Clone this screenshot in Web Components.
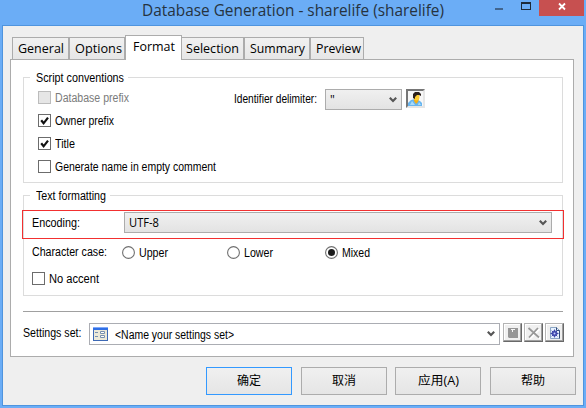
<!DOCTYPE html>
<html lang="zh">
<head>
<meta charset="utf-8">
<title>Database Generation</title>
<style>
html,body{margin:0;width:586px;height:408px;overflow:hidden;background:#6badf6}
body{font:12px/16px "Liberation Sans","Noto Sans CJK SC",sans-serif;color:#000}
</style>
</head>
<body>
<generation-dialog></generation-dialog>
<script>
function define(name, html, ready){
  const t=document.createElement('template');
  t.innerHTML=html;
  customElements.define(name,class extends HTMLElement{
    constructor(){super();this.attachShadow({mode:'open'}).append(t.content.cloneNode(true));}
    connectedCallback(){if(ready)ready(this,this.shadowRoot);}
  });
}

/* Single-line text condensed or widened to the width given in the w attribute. */
define('ui-text',`<style>:host{display:block;flex:none;white-space:pre;height:16px;line-height:16px}
span{display:inline-block;transform-origin:0 0}</style><span><slot></slot></span>`,(el,root)=>{
  const w=+el.getAttribute('w'),s=root.querySelector('span');
  if(!w)return;
  const natural=s.getBoundingClientRect().width;
  s.style.width=w+'px';
  s.style.transform='scaleX('+(w+1)/natural+')';
});

define('title-bar',`<style>
:host{display:flex;height:25px;align-items:flex-start}
ui-text{margin:0 0 0 142px;width:353px;height:20px;line-height:20px;font:16px/20px "Open Sans",sans-serif;color:#26333f}
.min{width:8px;height:2px;background:#41658f;margin-top:8px}
.max{box-sizing:border-box;width:10px;height:8px;border:1px solid #1d2b3a;border-top-width:2px;margin:2px 0 0 18px}
.close{width:45px;height:16px;background:#c75050;margin-left:8px}
svg{display:block}
</style><ui-text w="301">Database Generation - sharelife (sharelife)</ui-text>
<div class="min"></div><div class="max"></div>
<div class="close"><svg width="45" height="16"><path d="M20 3.5l6 6M26 3.5l-6 6" stroke="#fff" stroke-width="1.8"/></svg></div>`);

define('tab-item',`<style>
:host{display:block;box-sizing:border-box;height:22px;border:1px solid #acacac;border-bottom:0;background:linear-gradient(#f1f1f1,#e6e6e6);font:13px/16px "Open Sans",sans-serif;padding:2px 0 0 5px}
:host([active]){position:relative;height:25px;background:#fff;padding:2px 0 0 7px;margin-bottom:-1px}
</style><slot></slot>`);

define('check-box',`<style>
:host{display:flex;gap:4px;height:16px}
i{box-sizing:border-box;width:13px;height:13px;border:1px solid #6c6c6c;background:#fff;margin-top:1px;flex:none}
svg{display:none}
:host([checked]) svg{display:block}
:host([disabled]){color:#7b7b7b}
:host([disabled]) i{background:#e6e6e6;border-color:#bcbcbc}
</style><i><svg width="11" height="11"><path d="M2.2 5.3L4.6 8.3L9 2.6" fill="none" stroke="#111" stroke-width="2.2"/></svg></i><slot></slot>`);

define('radio-button',`<style>
:host{display:flex;gap:4px;height:16px;flex:none}
svg{margin-top:2px;flex:none}
ui-text,::slotted(*){margin-top:1px}
.dot{display:none}:host([checked]) .dot{display:block}
</style><svg width="13" height="13"><circle cx="6.5" cy="6.5" r="5.9" fill="#fff" stroke="#707070" stroke-width="1.1"/><circle class="dot" cx="6.5" cy="6.5" r="3.5" fill="#1c1c1c"/></svg><slot></slot>`);

define('drop-down',`<style>
:host{display:flex;box-sizing:border-box;height:21px;border:1px solid #acacac;background:linear-gradient(#f0f0f0,#e3e3e3);padding-left:4px;flex:none}
:host([plain]){background:#fff;height:22px;border-color:#abadb3}
.v{margin:6px 4px 0 auto}
</style><slot></slot><svg class="v" width="8" height="8"><path d="M.8 1.8L4 5.1L7.200 1.800" fill="none" stroke="#555" stroke-width="2.1"/></svg>`);

define('group-box',`<style>
:host{display:block;box-sizing:border-box;width:540px;border:1px solid #dcdcdc}
.legend{height:16px;margin:-8px 0 0 6px;padding-left:6px;background:#fff;box-sizing:border-box;width:var(--legend)}
</style><div class="legend"><slot name="legend"></slot></div><slot></slot>`);

define('tool-button',`<style>
:host{display:block;box-sizing:border-box;width:19px;height:19px;background:#f0f0f0;border:1px solid;border-color:#b4b4b4 #696969 #696969 #b4b4b4;box-shadow:inset -1px -1px #a0a0a0,inset 1px 1px #fff;flex:none}
:host([sunken]){background:#f7f7f7;border:2px solid;border-color:#767676 #e6e6e6 #e6e6e6 #767676;box-shadow:none}
</style><slot></slot>`);

define('push-button',`<style>
:host{display:flex;box-sizing:border-box;width:86px;height:28px;border:1px solid #acacac;background:linear-gradient(#f0f0f0,#e5e5e5);align-items:center;justify-content:center;font:12px/16px "Open Sans","Noto Sans CJK SC",sans-serif}
:host([default]){border-color:#3399ff}
</style><slot></slot>`);

define('settings-row',`<style>
:host{display:flex;margin-top:11px;align-items:flex-start}
.l{width:66px;margin-top:2px}drop-down{width:411px}
.form{margin:3px 7px 0 -1px;flex:none}
.t{margin-top:3px;font:12px/16px "Liberation Sans",sans-serif}
.tools{display:flex;gap:2px;margin-left:3px}svg{display:block}
</style><ui-text class="l" w="57.5">Settings set:</ui-text>
<drop-down plain><svg class="form" width="15" height="14" viewBox="0 0 15 14"><path d="M0 0h15v14H0z" fill="#3d69b5"/><path d="M0 0h15v3H0z" fill="#306fe5"/><path d="M0 0h15v1H0z" fill="#80aafa"/><path d="M1 3h13v10H1z" fill="#ece9d8"/><path d="M2 5.5h3M2 9.5h3" stroke="#7890af"/><path d="M7.5 4.5h4v2h-4zM7.5 8.5h4v2h-4z" fill="#fff" stroke="#7890af"/></svg><ui-text class="t" w="118">&lt;Name your settings set&gt;</ui-text></drop-down>
<div class="tools">
<tool-button><svg width="17" height="17"><path d="M4 4h10v10H5l-1-1z" fill="#969696"/><path d="M7 5h4v1H9v2H8V6H7z" fill="#f6f6f6"/></svg></tool-button>
<tool-button><svg width="17" height="17"><path d="M4 4.5l10 9M13.5 4l-9.5 9.5" stroke="#fff" stroke-width="2" transform="translate(1 1)"/><path d="M3.5 4l10.5 9.5M13 4l-9 9.5" stroke="#989898" stroke-width="1.8"/></svg></tool-button>
<tool-button><svg width="17" height="17"><path d="M4.5 3.5h6l3 3v8h-9z" fill="#e8f2ff" stroke="#8aa5c4"/><path d="M10.5 3.5v3h3v8" fill="none" stroke="#334c79"/><circle cx="8.5" cy="9.5" r="2.6" fill="#7587e1" stroke="#3a43a6"/><path d="M8.5 5.5v8M4.5 9.5h8M5.7 6.7l5.6 5.6M11.3 6.7l-5.6 5.6" stroke="#3942a5" stroke-width=".9"/><circle cx="8.5" cy="9.5" r="1" fill="#c5cfff"/></svg></tool-button>
</div>`);

define('format-panel',`<style>
:host{display:block;box-sizing:border-box;width:564px;height:298px;margin-left:7px;border:1px solid #acacac;background:#fff;padding:17px 0 0 12px}
.g1{height:106px;--legend:98px}.g2{height:101px;margin-top:12px;--legend:80px}
.body{display:flex}.checks{box-sizing:border-box;display:flex;flex-direction:column;gap:7px;padding:4px 0 0 14px;width:210px}
.delim{display:flex;padding-top:3px;align-items:flex-start}
.delim>ui-text{width:91px;margin-top:2px}.delim drop-down{width:77px;margin-right:4px}
.enc{box-sizing:border-box;display:flex;width:542px;height:29px;border:1px solid #f23030;margin:6px 0 0 -2px;padding-left:9px;align-items:flex-start}
.enc>ui-text{width:92px;margin-top:4px}.enc drop-down{width:428px;margin-top:1px}
.val{font:12px/16px "Open Sans",sans-serif;margin-top:2px}
.case{display:flex;margin:5px 0 0 8px}.case>ui-text{width:90px}
.acc{margin:11px 0 0 8px}
.rule{width:540px;height:1px;background:#a0a0a0;margin-top:15px}
svg{display:block}
</style>
<group-box class="g1"><ui-text slot="legend" w="87">Script conventions</ui-text>
<div class="body"><div class="checks">
<check-box disabled><ui-text w="73">Database prefix</ui-text></check-box>
<check-box checked><ui-text w="58">Owner prefix</ui-text></check-box>
<check-box checked><ui-text w="19">Title</ui-text></check-box>
<check-box><ui-text w="160">Generate name in empty comment</ui-text></check-box>
</div><div class="delim"><ui-text w="82">Identifier delimiter:</ui-text><drop-down><ui-text class="val">"</ui-text></drop-down>
<tool-button sunken><svg width="15" height="15"><path d="M0 15V12l3-3 4-1 5 2 2 2v3z" fill="#68b5ef"/><path d="M2 14l2-4 3 4zM10 14l1-3 2 3z" fill="#a9dcfb"/><path d="M6 8h5l-1 3-2 2-2-3z" fill="#f4ae18"/><ellipse cx="8.5" cy="6" rx="3" ry="3.5" fill="#ffcd31"/><path d="M5 7V3l2-2h4l2 2v2l-2-1H9L7 6v2z" fill="#2c211c"/></svg></tool-button>
</div></div></group-box>
<group-box class="g2"><ui-text slot="legend" w="69">Text formatting</ui-text>
<div class="enc"><ui-text w="47">Encoding:</ui-text><drop-down><ui-text class="val" w="29">UTF-8</ui-text></drop-down></div>
<div class="case"><ui-text w="74">Character case:</ui-text>
<radio-button style="width:105px"><ui-text w="28">Upper</ui-text></radio-button>
<radio-button style="width:98px"><ui-text w="28">Lower</ui-text></radio-button>
<radio-button checked><ui-text w="27">Mixed</ui-text></radio-button></div>
<check-box class="acc"><ui-text w="49">No accent</ui-text></check-box>
</group-box>
<div class="rule"></div><settings-row></settings-row>`);

define('generation-dialog',`<style>
:host{display:block;width:586px;height:408px;background:#6badf6}
.client{box-sizing:border-box;width:582px;height:381px;margin-left:2px;border:1px solid #4f94de;background:#efefef}
.tabs{display:flex;height:33px;align-items:flex-end;padding-left:9px}
.buttons{display:flex;padding:10px 0 0 203px}
</style><title-bar></title-bar><div class="client">
<div class="tabs">
<tab-item style="width:57px"><ui-text w="45">General</ui-text></tab-item>
<tab-item style="width:56px"><ui-text w="46">Options</ui-text></tab-item>
<tab-item active style="width:57px"><ui-text w="41">Format</ui-text></tab-item>
<tab-item style="width:62px;padding-left:4px;border-left:0"><ui-text w="52">Selection</ui-text></tab-item>
<tab-item style="width:66px"><ui-text w="54">Summary</ui-text></tab-item>
<tab-item style="width:54px"><ui-text w="44">Preview</ui-text></tab-item>
</div><format-panel></format-panel>
<div class="buttons"><push-button default style="margin-right:9px">确定</push-button><push-button style="margin-right:8px">取消</push-button><push-button style="margin-right:9px"><ui-text w="40">应用(A)</ui-text></push-button><push-button>帮助</push-button></div>
</div>`);
</script>
</body>
</html>
